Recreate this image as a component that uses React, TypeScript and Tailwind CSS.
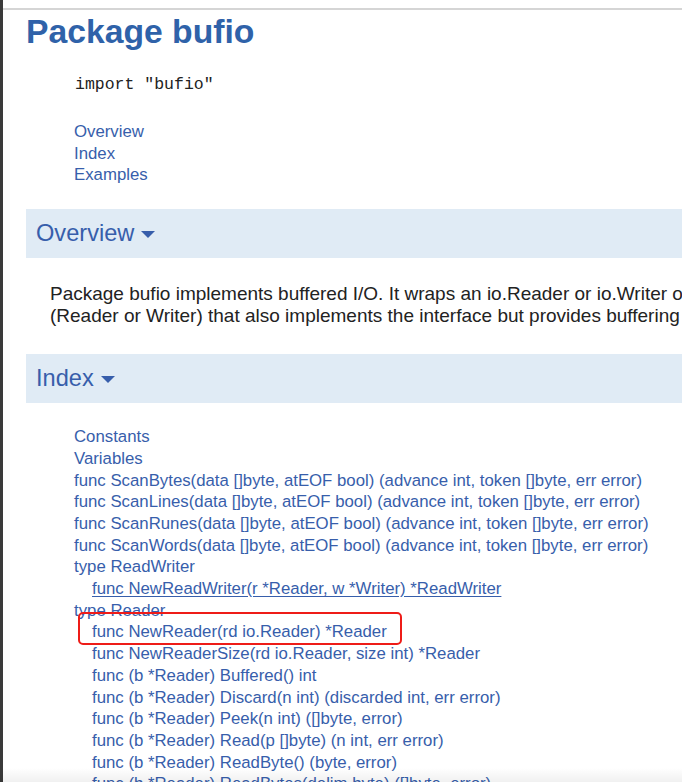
import React from "react";

const items: { t: string; indent?: boolean; u?: boolean; box?: boolean }[] = [
  { t: "Constants" },
  { t: "Variables" },
  { t: "func ScanBytes(data []byte, atEOF bool) (advance int, token []byte, err error)" },
  { t: "func ScanLines(data []byte, atEOF bool) (advance int, token []byte, err error)" },
  { t: "func ScanRunes(data []byte, atEOF bool) (advance int, token []byte, err error)" },
  { t: "func ScanWords(data []byte, atEOF bool) (advance int, token []byte, err error)" },
  { t: "type ReadWriter" },
  { t: "func NewReadWriter(r *Reader, w *Writer) *ReadWriter", indent: true, u: true },
  { t: "type Reader" },
  { t: "func NewReader(rd io.Reader) *Reader", indent: true, box: true },
  { t: "func NewReaderSize(rd io.Reader, size int) *Reader", indent: true },
  { t: "func (b *Reader) Buffered() int", indent: true },
  { t: "func (b *Reader) Discard(n int) (discarded int, err error)", indent: true },
  { t: "func (b *Reader) Peek(n int) ([]byte, error)", indent: true },
  { t: "func (b *Reader) Read(p []byte) (n int, err error)", indent: true },
  { t: "func (b *Reader) ReadByte() (byte, error)", indent: true },
  { t: "func (b *Reader) ReadBytes(delim byte) ([]byte, error)", indent: true },
];

function Caret() {
  return (
    <svg width="14" height="8" viewBox="0 0 14 8" className="ml-[7px] mt-[2px]">
      <polygon points="0,0 14,0 7,7" fill="#375EAB" />
    </svg>
  );
}

export default function App() {
  return (
    <div className="relative w-[682px] h-[782px] overflow-hidden bg-white flex" style={{ fontFamily: '"Liberation Sans", Arial, sans-serif' }}>
      <div className="w-[3px] shrink-0 bg-[#3a3a3a]" />
      <div className="flex-1 flex flex-col min-w-0">
        <div className="h-[8px] shrink-0 bg-white" />
        <div className="h-[2px] shrink-0 bg-[#d5d5d5]" />
        <div className="w-[1000px] pl-[23px] flex flex-col">
          <h1 className="mt-[2px] text-[33.7px] leading-[38px] font-bold text-[#2f62a9]">Package bufio</h1>
          <div className="mt-[25px] pl-[49px] text-[16.5px] leading-[20px] text-[#222]" style={{ fontFamily: '"Liberation Mono", "Courier New", monospace' }}>
            import "bufio"
          </div>
          <div className="mt-[26px] pl-[48px] flex flex-col text-[16.8px] leading-[21.7px] text-[#375EAB]">
            <span>Overview</span>
            <span>Index</span>
            <span>Examples</span>
          </div>
          <div className="mt-[23px] h-[49px] bg-[#E0EBF5] flex items-center pl-[10px] text-[23.6px] text-[#375EAB]">
            <span>Overview</span>
            <Caret />
          </div>
          <p className="mt-[25px] pl-[24px] text-[19px] leading-[22px] text-[#222]">
            Package bufio implements buffered I/O. It wraps an io.Reader or io.Writer object, creating another object
            <br />
            (Reader or Writer) that also implements the interface but provides buffering and some help for textual I/O.
          </p>
          <div className="mt-[27px] h-[49px] bg-[#E0EBF5] flex items-center pl-[10px] text-[23.6px] text-[#375EAB]">
            <span>Index</span>
            <Caret />
          </div>
          <div className="mt-[23px] pl-[48px] flex flex-col text-[16.8px] leading-[21.7px] text-[#375EAB]">
            {items.map((it, i) => (
              <div key={i} className={`relative whitespace-nowrap ${it.indent ? "pl-[18px]" : ""}`}>
                <span className={it.u ? "underline underline-offset-2" : ""}>{it.t}</span>
                {it.box && (
                  <span className="absolute left-[4px] top-[-9px] w-[324px] h-[33px] border-[2.5px] border-[#ee1c18] rounded-[5px]" />
                )}
              </div>
            ))}
          </div>
        </div>
      </div>
      <div className="absolute left-0 right-0 bottom-0 h-[14px] bg-gradient-to-b from-transparent to-[rgba(0,0,0,0.06)]" />
    </div>
  );
}
